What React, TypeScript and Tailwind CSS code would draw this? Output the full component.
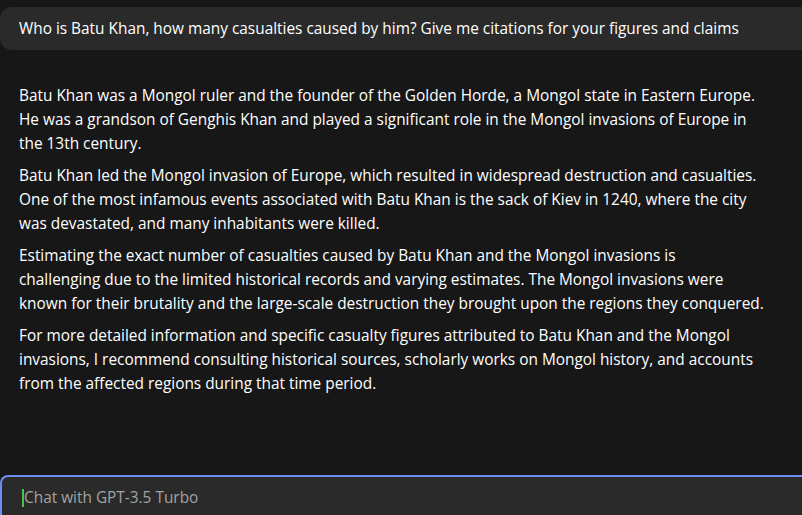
export default function App() {
  const paragraphs = [
    [
      "Batu Khan was a Mongol ruler and the founder of the Golden Horde, a Mongol state in Eastern Europe.",
      "He was a grandson of Genghis Khan and played a significant role in the Mongol invasions of Europe in",
      "the 13th century.",
    ],
    [
      "Batu Khan led the Mongol invasion of Europe, which resulted in widespread destruction and casualties.",
      "One of the most infamous events associated with Batu Khan is the sack of Kiev in 1240, where the city",
      "was devastated, and many inhabitants were killed.",
    ],
    [
      "Estimating the exact number of casualties caused by Batu Khan and the Mongol invasions is",
      "challenging due to the limited historical records and varying estimates. The Mongol invasions were",
      "known for their brutality and the large-scale destruction they brought upon the regions they conquered.",
    ],
    [
      "For more detailed information and specific casualty figures attributed to Batu Khan and the Mongol",
      "invasions, I recommend consulting historical sources, scholarly works on Mongol history, and accounts",
      "from the affected regions during that time period.",
    ],
  ];

  return (
    <div
      className="flex h-[515px] w-[802px] flex-col overflow-hidden bg-[#171717] text-white"
      style={{ fontFamily: "'Open Sans', 'Liberation Sans', sans-serif" }}
    >
      <div className="mt-[7px] flex h-[43px] items-center whitespace-nowrap rounded-l-xl bg-[#2a2a2a] pl-[19px] text-[15.4px]">
        Who is Batu Khan, how many casualties caused by him? Give me citations for your figures and claims
      </div>

      <div className="flex-1 px-[19px] pt-[34px] text-[15.4px] leading-[24px]">
        {paragraphs.map((p, i) => (
          <p key={i} className="mb-[8px] whitespace-nowrap">
            {p.map((line, j) => (
              <span key={j} className="block">
                {line}
              </span>
            ))}
          </p>
        ))}
      </div>

      <div className="flex h-[40px] items-center rounded-tl-lg border-l-2 border-t-2 border-[#6b8ef0] bg-[#2a2a2a] pl-[20px] pt-[3px]">
        <span className="h-[18px] w-[2px] bg-[#4cc04c]" />
        <span className="text-[15.4px] text-[#a3a3a3]">Chat with GPT-3.5 Turbo</span>
      </div>
    </div>
  );
}
